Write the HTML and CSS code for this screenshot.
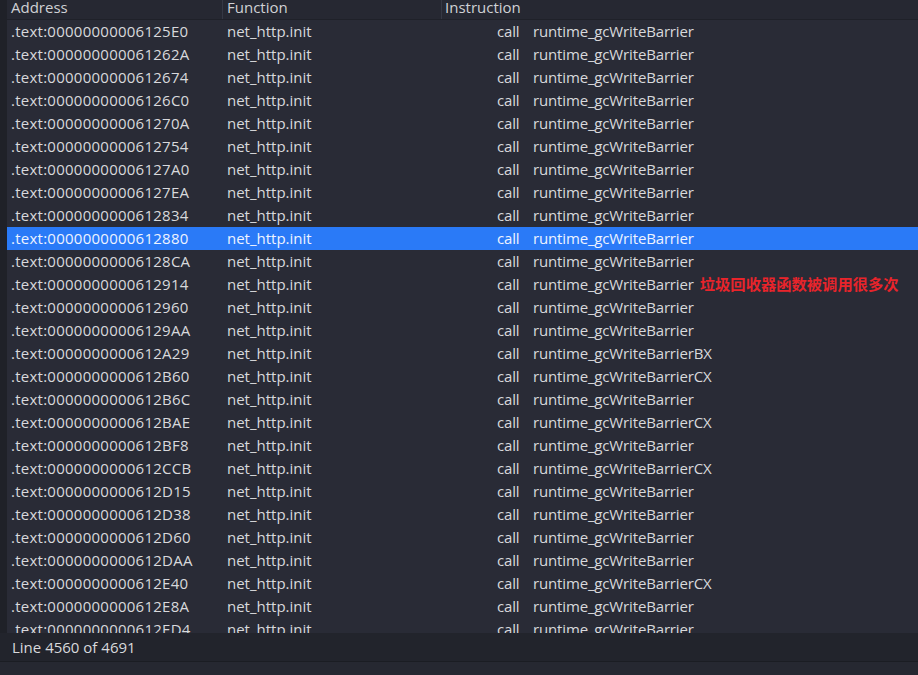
FILE: index.html
```html
<!DOCTYPE html>
<html lang="zh">
<head>
  <meta charset="UTF-8" />
  <title>xrefs</title>
  <link rel="stylesheet" href="styles.css">
</head>
<body>
  <div class="view">
    <div class="gutter"></div>
    <div class="table">
      <div class="head">
        <div class="hcell">Address</div>
        <div class="hcell">Function</div>
        <div class="hcell">Instruction</div>
      </div>
      <div class="rows">
        <div class="row"><span class="addr">.text:00000000006125E0</span><span>net_http.init</span><span class="ins"><i>call</i>runtime_gcWriteBarrier</span></div>
        <div class="row"><span class="addr">.text:000000000061262A</span><span>net_http.init</span><span class="ins"><i>call</i>runtime_gcWriteBarrier</span></div>
        <div class="row"><span class="addr">.text:0000000000612674</span><span>net_http.init</span><span class="ins"><i>call</i>runtime_gcWriteBarrier</span></div>
        <div class="row"><span class="addr">.text:00000000006126C0</span><span>net_http.init</span><span class="ins"><i>call</i>runtime_gcWriteBarrier</span></div>
        <div class="row"><span class="addr">.text:000000000061270A</span><span>net_http.init</span><span class="ins"><i>call</i>runtime_gcWriteBarrier</span></div>
        <div class="row"><span class="addr">.text:0000000000612754</span><span>net_http.init</span><span class="ins"><i>call</i>runtime_gcWriteBarrier</span></div>
        <div class="row"><span class="addr">.text:00000000006127A0</span><span>net_http.init</span><span class="ins"><i>call</i>runtime_gcWriteBarrier</span></div>
        <div class="row"><span class="addr">.text:00000000006127EA</span><span>net_http.init</span><span class="ins"><i>call</i>runtime_gcWriteBarrier</span></div>
        <div class="row"><span class="addr">.text:0000000000612834</span><span>net_http.init</span><span class="ins"><i>call</i>runtime_gcWriteBarrier</span></div>
        <div class="row selected"><span class="addr">.text:0000000000612880</span><span>net_http.init</span><span class="ins"><i>call</i>runtime_gcWriteBarrier</span></div>
        <div class="row"><span class="addr">.text:00000000006128CA</span><span>net_http.init</span><span class="ins"><i>call</i>runtime_gcWriteBarrier</span></div>
        <div class="row"><span class="addr">.text:0000000000612914</span><span>net_http.init</span><span class="ins"><i>call</i>runtime_gcWriteBarrier<b class="note">垃圾回收器函数被调用很多次</b></span></div>
        <div class="row"><span class="addr">.text:0000000000612960</span><span>net_http.init</span><span class="ins"><i>call</i>runtime_gcWriteBarrier</span></div>
        <div class="row"><span class="addr">.text:00000000006129AA</span><span>net_http.init</span><span class="ins"><i>call</i>runtime_gcWriteBarrier</span></div>
        <div class="row"><span class="addr">.text:0000000000612A29</span><span>net_http.init</span><span class="ins"><i>call</i>runtime_gcWriteBarrierBX</span></div>
        <div class="row"><span class="addr">.text:0000000000612B60</span><span>net_http.init</span><span class="ins"><i>call</i>runtime_gcWriteBarrierCX</span></div>
        <div class="row"><span class="addr">.text:0000000000612B6C</span><span>net_http.init</span><span class="ins"><i>call</i>runtime_gcWriteBarrier</span></div>
        <div class="row"><span class="addr">.text:0000000000612BAE</span><span>net_http.init</span><span class="ins"><i>call</i>runtime_gcWriteBarrierCX</span></div>
        <div class="row"><span class="addr">.text:0000000000612BF8</span><span>net_http.init</span><span class="ins"><i>call</i>runtime_gcWriteBarrier</span></div>
        <div class="row"><span class="addr">.text:0000000000612CCB</span><span>net_http.init</span><span class="ins"><i>call</i>runtime_gcWriteBarrierCX</span></div>
        <div class="row"><span class="addr">.text:0000000000612D15</span><span>net_http.init</span><span class="ins"><i>call</i>runtime_gcWriteBarrier</span></div>
        <div class="row"><span class="addr">.text:0000000000612D38</span><span>net_http.init</span><span class="ins"><i>call</i>runtime_gcWriteBarrier</span></div>
        <div class="row"><span class="addr">.text:0000000000612D60</span><span>net_http.init</span><span class="ins"><i>call</i>runtime_gcWriteBarrier</span></div>
        <div class="row"><span class="addr">.text:0000000000612DAA</span><span>net_http.init</span><span class="ins"><i>call</i>runtime_gcWriteBarrier</span></div>
        <div class="row"><span class="addr">.text:0000000000612E40</span><span>net_http.init</span><span class="ins"><i>call</i>runtime_gcWriteBarrierCX</span></div>
        <div class="row"><span class="addr">.text:0000000000612E8A</span><span>net_http.init</span><span class="ins"><i>call</i>runtime_gcWriteBarrier</span></div>
        <div class="row"><span class="addr">.text:0000000000612ED4</span><span>net_http.init</span><span class="ins"><i>call</i>runtime_gcWriteBarrier</span></div>
      </div>
    </div>
  </div>
  <div class="status">Line 4560 of 4691</div>
  <div class="bottom"></div>
</body>
</html>
```

FILE: styles.css
```css
body {
  margin: 0;
  height: 675px;
  overflow: hidden;
  display: flex;
  flex-direction: column;
  background: #23252e;
  font-family: "Open Sans", "Noto Sans CJK SC", sans-serif;
  font-size: 15px;
  color: #d8d9dc;
}
.view {
  height: 633px;
  flex-shrink: 0;
  display: flex;
  overflow: hidden;
}
.gutter {
  width: 7px;
  background: #1f2128;
}
.table {
  flex: 1;
  background: #292b36;
  display: flex;
  flex-direction: column;
  overflow: hidden;
}
.head {
  display: grid;
  grid-template-columns: 216px 219px 1fr;
  height: 19px;
  flex-shrink: 0;
  border-bottom: 1px solid #1f2129;
  background: #262832;
  overflow: hidden;
}
.hcell {
  padding-left: 4px;
  line-height: 15px;
  border-right: 1px solid #353844;
  color: #d0d1d5;
}
.hcell:last-child {
  border-right: none;
  padding-left: 3px;
}
.rows {
  display: flex;
  flex-direction: column;
}
.row {
  display: grid;
  grid-template-columns: 216px 219px 1fr;
  height: 23px;
  line-height: 23px;
  flex-shrink: 0;
  white-space: nowrap;
}
.row span {
  padding-left: 4px;
}
.row .addr {
  letter-spacing: 0.25px;
}
.row.selected {
  background: #2a7af7;
  color: #eef3ff;
}
.ins {
  padding-left: 55px !important;
  letter-spacing: -0.15px;
}
.ins i {
  font-style: normal;
  display: inline-block;
  width: 36px;
}
.note {
  color: #e8242b;
  font-size: 15.3px;
  letter-spacing: 0;
  margin-left: 6px;
}
.status {
  height: 28px;
  line-height: 28px;
  padding-left: 12px;
  background: #22242c;
  border-bottom: 1px solid #1b1d23;
}
.bottom {
  flex: 1;
  background: #262831;
}
```
